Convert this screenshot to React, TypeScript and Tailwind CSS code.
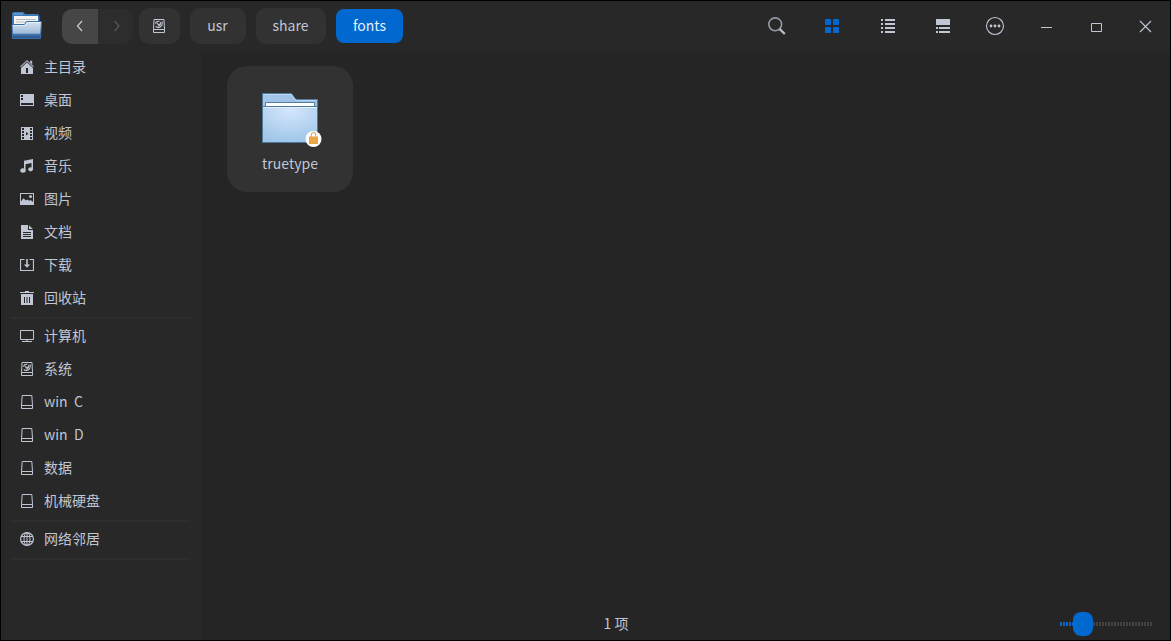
import { useState, type ReactNode } from "react";

type IconProps = { children: ReactNode; size?: string; box?: number };

function Icon({ children, size = "size-3.5", box = 14 }: IconProps) {
  return (
    <svg className={`${size} shrink-0`} viewBox={`0 0 ${box} ${box}`} fill="currentColor" aria-hidden="true">
      {children}
    </svg>
  );
}

const HomeIcon = () => (
  <Icon>
    <path d="M0.5 6.8 7 0.8l6.5 6" fill="none" stroke="currentColor" strokeWidth="1.3" opacity="0.75" />
    <path d="M10.2 0.8h2v3.4l-2-1.8z" />
    <path fillRule="evenodd" d="M7 2.6 1 8v6h12V8zM6 8v5h2V8z" />
  </Icon>
);

const DesktopIcon = () => (
  <Icon>
    <path fillRule="evenodd" d="M0 1h14v12H0zM1 2h2v2H1zM1 5h2v2H1zM1 10h12v2H1z" />
  </Icon>
);

const VideoIcon = () => (
  <Icon>
    <path
      fillRule="evenodd"
      d="M1 1h12v13H1zM2 2v2h2V2zM2 5v2h2V5zM2 8v2h2V8zM2 11v2h2v-2zM10 2v2h2V2zM10 5v2h2V5zM10 8v2h2V8zM10 11v2h2v-2zM6 6v3.400l2.500-1.700z"
    />
  </Icon>
);

const MusicIcon = () => (
  <Icon>
    <path d="M4 1.800 13 0v10.200h-1.500V4L5.500 5.200v6.300H4z" />
    <ellipse cx="3" cy="11.500" rx="2.700" ry="2.200" />
    <ellipse cx="10.600" cy="10.300" rx="2.400" ry="2.100" />
  </Icon>
);

const PictureIcon = () => (
  <Icon>
    <path fillRule="evenodd" d="M0 1h14v12H0zM1 2v7.500L3.500 6.300 6 8.500l1.500-1 1.500 1.200L10.500 8 13 10V2z" />
    <circle cx="10.500" cy="4.500" r="1.500" />
  </Icon>
);

const DocumentIcon = () => (
  <Icon>
    <path
      fillRule="evenodd"
      d="M1 0h7v5h5v9H1zM3 7v1h8V7zM3 9v1h8V9zM3 11v1h8v-1z"
    />
    <path d="M9 0.200 12.800 4H9z" />
  </Icon>
);

const DownloadIcon = () => (
  <Icon>
    <path d="M4.500 1.500h-4v11h13v-11h-4" fill="none" stroke="currentColor" strokeWidth="1.200" />
    <path d="M6.200 1h1.600v5.500H10.200L7 9.700 3.800 6.500h2.400z" />
  </Icon>
);

const TrashIcon = () => (
  <Icon>
    <path fillRule="evenodd" d="M1 3h12v11H1zM4 6v6h1V6zM6.500 6v6h1V6zM9 6v6h1V6z" />
    <path d="M0 1h5V0h4v1h5v1H0z" />
  </Icon>
);

const ComputerIcon = () => (
  <Icon>
    <path d="M0.500 1.500h13v9H0.500zM2 12.500h10M7 10.500v2" fill="none" stroke="currentColor" />
  </Icon>
);

const DiskIcon = () => (
  <Icon>
    <path d="M2.200 0.500h9.600L12.500 10.500v3h-11v-3zM1.500 10.500h11" fill="none" stroke="currentColor" />
  </Icon>
);

const SystemDiskIcon = () => (
  <Icon>
    <path d="M2 0.500h10L12.500 10.500v3h-11v-3zM1.500 10.500h11" fill="none" stroke="currentColor" />
    <path
      d="M7.500 2.300c-2.300-.4-3.900.6-3.900 2.500M5.200 3.800c.1 1.900 2 2.200 2.600.9M10 2.500c1 2.600-.4 5.600-3.200 6-1.500.2-2.600-.4-3-1.200M8.600 3c.5 2-.6 3.900-2.800 4.200"
      fill="none"
      stroke="currentColor"
      strokeWidth="1.100"
    />
  </Icon>
);

const NetworkIcon = () => (
  <Icon>
    <g fill="none" stroke="currentColor">
      <circle cx="7" cy="7" r="6.400" strokeWidth="1.200" />
      <ellipse cx="7" cy="7" rx="3" ry="6.400" />
      <path d="M1.200 4.500h11.600M1.200 9.500h11.600M7 0.500v13" />
    </g>
  </Icon>
);

function FileManagerLogo() {
  return (
    <svg className="h-7 w-8 shrink-0" viewBox="0 0 32 28" aria-hidden="true">
      <defs>
        <linearGradient id="logoFront" x1="0" y1="0" x2="0" y2="1">
          <stop offset="0" stopColor="#d8e3ef" />
          <stop offset="0.680" stopColor="#9fbbd9" />
          <stop offset="0.760" stopColor="#4574a8" />
          <stop offset="1" stopColor="#234c82" />
        </linearGradient>
      </defs>
      <path d="M1 1.500 2.500 0h10L14 2h13l1.500 2v20H1z" fill="#3d78b8" />
      <path d="M2.500 1h9.500v2H2.500z" fill="#5c94cf" />
      <path d="M3 4h24v12H3z" fill="#f4f4f2" />
      <path d="M5 7h20v1H5zM5 9.500h20v1H5z" fill="#b9b9b9" />
      <path d="M1 12.500h12.500L15.500 9.500h15L29.500 26.500h-28z" fill="url(#logoFront)" stroke="#3670ae" />
      <path d="M2 13.500h12L16.500 10.500h13" fill="none" stroke="#f3f8ff" strokeWidth="0.700" />
    </svg>
  );
}

function FolderPicture() {
  return (
    <svg className="h-[60px] w-16" viewBox="0 0 64 60" aria-hidden="true">
      <defs>
        <radialGradient id="folderFront" cx="0.500" cy="0.100" r="0.900">
          <stop offset="0" stopColor="#d4e6fc" />
          <stop offset="1" stopColor="#9fc6e8" />
        </radialGradient>
        <linearGradient id="folderBack" x1="0" y1="0" x2="1" y2="0">
          <stop offset="0" stopColor="#a6c6e9" />
          <stop offset="1" stopColor="#9abde4" />
        </linearGradient>
      </defs>
      <path d="M4.500 2.500h28c3 0 3 6 7 6h20v43h-55z" fill="url(#folderBack)" stroke="#4b7c9c" />
      <path d="M5.500 3.500h27c3 0 3 6 7 6h19" fill="none" stroke="#c7dcf3" strokeWidth="0.800" />
      <path d="M7.500 16v-4.500h49V16z" fill="#fff" stroke="#527f9d" />
      <path d="M4.500 15.500h55v36h-55z" fill="url(#folderFront)" stroke="#4b7c9c" />
      <path d="M5 16.500h54" stroke="#e5f1ff" />
      <circle cx="55.500" cy="48" r="8" fill="#fff" />
      <path d="M53.300 46v-2.200c0-3 4.400-3 4.400 0V46" fill="none" stroke="#eda54a" strokeWidth="1.100" />
      <path d="M51 45.500h9v7.500h-9z" fill="#eda445" />
    </svg>
  );
}

type Place = { label: string; icon: () => ReactNode };

const groups: Place[][] = [
  [
    { label: "主目录", icon: HomeIcon },
    { label: "桌面", icon: DesktopIcon },
    { label: "视频", icon: VideoIcon },
    { label: "音乐", icon: MusicIcon },
    { label: "图片", icon: PictureIcon },
    { label: "文档", icon: DocumentIcon },
    { label: "下载", icon: DownloadIcon },
    { label: "回收站", icon: TrashIcon },
  ],
  [
    { label: "计算机", icon: ComputerIcon },
    { label: "系统", icon: SystemDiskIcon },
    { label: "win  C", icon: DiskIcon },
    { label: "win  D", icon: DiskIcon },
    { label: "数据", icon: DiskIcon },
    { label: "机械硬盘", icon: DiskIcon },
  ],
  [{ label: "网络邻居", icon: NetworkIcon }],
];

function Sidebar() {
  return (
    <nav aria-label="位置" className="w-[200px] shrink-0 bg-[#282828]">
      {groups.map((places, index) => (
        <div key={index} className="mb-px">
          <ul className="flex flex-col gap-px">
            {places.map(({ label, icon: PlaceIcon }) => (
              <li key={label}>
                <a href="#" className="flex h-8 items-center gap-2.5 pl-[19px] whitespace-pre">
                  <PlaceIcon />
                  <span className="pb-0.5">{label}</span>
                </a>
              </li>
            ))}
          </ul>
          <div className="mt-[3px] mr-[11px] ml-2.5 h-0.5 bg-[#2d2d2d]" />
        </div>
      ))}
    </nav>
  );
}

function ToolButton({ label, children }: { label: string; children: ReactNode }) {
  return (
    <button type="button" aria-label={label} className="flex h-9 w-9 items-center justify-center">
      <Icon size="size-5" box={20}>
        {children}
      </Icon>
    </button>
  );
}

function WindowButton({ label, children }: { label: string; children: ReactNode }) {
  return (
    <button type="button" aria-label={label} className="flex h-9 w-[50px] items-center justify-center">
      <Icon size="size-5" box={20}>
        {children}
      </Icon>
    </button>
  );
}

function Header() {
  return (
    <header className="flex h-[50px] shrink-0 items-center bg-[#282828]">
      <div className="mr-[19px] ml-2.5">
        <FileManagerLogo />
      </div>
      <div className="flex h-[35px] overflow-hidden rounded-[10px]">
        <button type="button" aria-label="后退" className="flex w-9 items-center justify-center bg-[#464646]">
          <Icon size="size-5" box={20}>
            <path d="M12 5 7.500 10l4.500 5" fill="none" stroke="currentColor" strokeWidth="1.300" />
          </Icon>
        </button>
        <button
          type="button"
          aria-label="前进"
          disabled
          className="flex w-[35px] items-center justify-center bg-[#2d2d2d] text-[#555]"
        >
          <Icon size="size-5" box={20}>
            <path d="M8.500 5 13 10l-4.500 5" fill="none" stroke="currentColor" strokeWidth="1.300" />
          </Icon>
        </button>
      </div>
      <div className="ml-1.5 flex items-center gap-2.5">
        <button
          type="button"
          aria-label="系统盘"
          className="flex h-9 w-[41px] items-center justify-center rounded-[10px] bg-[#323232] pr-px"
        >
          <SystemDiskIcon />
        </button>
        <button type="button" className="h-9 w-14 rounded-[10px] bg-[#323232] pr-px pb-0.5">
          usr
        </button>
        <button type="button" className="h-9 w-[70px] rounded-[10px] bg-[#323232] pr-px pb-0.5">
          share
        </button>
        <button type="button" className="h-[34px] w-[67px] rounded-lg bg-[#0068cf] pb-0.5 text-[#e6f0fa]">
          fonts
        </button>
      </div>
      <div className="ml-auto flex gap-5">
        <ToolButton label="搜索">
          <circle cx="9.200" cy="8.300" r="6.400" fill="none" stroke="#9498a3" strokeWidth="1.600" />
          <path d="m13.500 12.800 5.300 5.200" stroke="#b6bac6" strokeWidth="2.400" />
        </ToolButton>
        <ToolButton label="图标视图">
          <g fill="#0068cf">
            <rect x="3" y="3" width="6" height="6" rx="0.700" />
            <rect x="11" y="3" width="6" height="6" rx="0.700" />
            <rect x="3" y="11" width="6" height="6" rx="0.700" />
            <rect x="11" y="11" width="6" height="6" rx="0.700" />
          </g>
        </ToolButton>
        <ToolButton label="列表视图">
          <path d="M3 3h2v2H3zM7 3h10v2H7zM3 7h2v2H3zM7 7h10v2H7zM3 11h2v2H3zM7 11h10v2H7zM3 15h2v2H3zM7 15h10v2H7z" />
        </ToolButton>
        <ToolButton label="分栏视图">
          <path d="M2 3h14v6H2zM2 11h2v2H2zM5 11h11v2H5zM2 15h2v2H2zM5 15h11v2H5z" />
        </ToolButton>
      </div>
      <div className="ml-2 flex">
        <WindowButton label="菜单">
          <circle cx="10" cy="10" r="8.500" fill="none" stroke="currentColor" strokeWidth="1.100" />
          <circle cx="6" cy="10" r="1.400" />
          <circle cx="10" cy="10" r="1.400" />
          <circle cx="14" cy="10" r="1.400" />
        </WindowButton>
        <WindowButton label="最小化">
          <path d="M6 11h11v1H6z" />
        </WindowButton>
        <WindowButton label="最大化">
          <path d="M6.500 7.500h10v8h-10z" fill="none" stroke="currentColor" />
        </WindowButton>
        <WindowButton label="关闭">
          <path d="m5 5 11 11M16 5 5 16" fill="none" stroke="currentColor" strokeWidth="1.100" />
        </WindowButton>
      </div>
    </header>
  );
}

function SizeSlider() {
  const [value, setValue] = useState(13);
  const filled = value + 10;
  return (
    <input
      type="range"
      aria-label="图标大小"
      min={0}
      max={72}
      value={value}
      onChange={(event) => setValue(Number(event.target.value))}
      className="mr-[18px] ml-[29px] h-6 w-[92px] appearance-none bg-transparent bg-[length:92px_4px] bg-center bg-no-repeat [&::-webkit-slider-thumb]:h-6 [&::-webkit-slider-thumb]:w-5 [&::-webkit-slider-thumb]:appearance-none [&::-webkit-slider-thumb]:rounded-lg [&::-webkit-slider-thumb]:bg-[#0068cf]"
      style={{
        backgroundImage: `repeating-linear-gradient(90deg, transparent 0 2px, #252525 2px 3px), linear-gradient(90deg, #0068cf ${filled}px, #424242 ${filled}px)`,
      }}
    />
  );
}

export default function App() {
  return (
    <div className="flex min-h-screen flex-col border border-black bg-[#252525] font-['Noto_Sans_CJK_SC',sans-serif] text-sm text-[#c0c6d4]">
      <Header />
      <div className="flex flex-1">
        <Sidebar />
        <div className="flex min-w-0 flex-1 flex-col">
          <main className="flex flex-1 flex-wrap content-start px-[26px] py-[15px]">
            <button
              type="button"
              className="flex size-[126px] flex-col items-center rounded-[20px] bg-[#323232] pt-[25px]"
            >
              <FolderPicture />
              <span className="mt-0.5 leading-5">truetype</span>
            </button>
          </main>
          <footer className="flex h-8 items-center">
            <p className="flex-1 pb-0.5 text-center">1 项</p>
            <SizeSlider />
          </footer>
        </div>
      </div>
    </div>
  );
}
